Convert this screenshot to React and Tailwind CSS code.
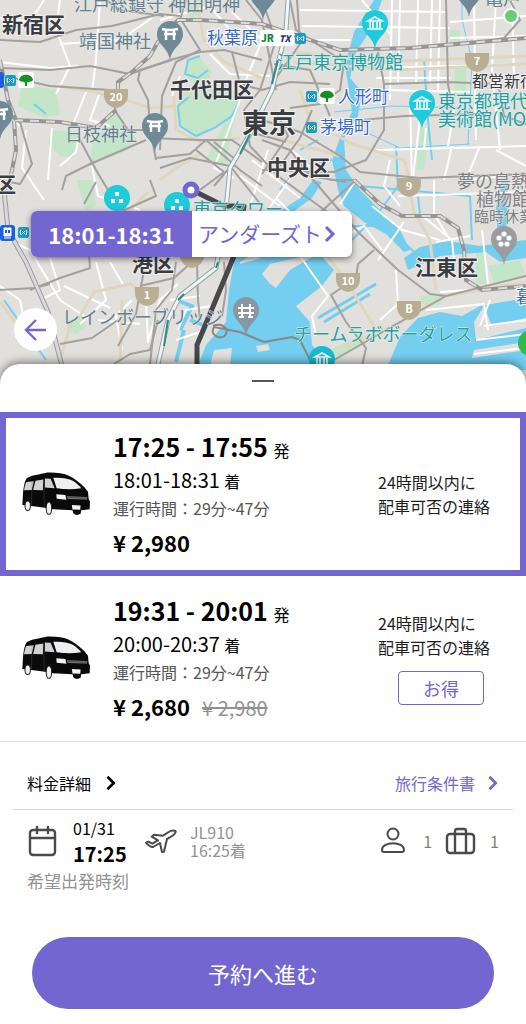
import React, { useState } from 'react';

const rides = [
    {
        id: 1,
        departure: '17:25 - 17:55',
        arrival: '18:01-18:31',
        duration: '運行時間：29分~47分',
        price: '¥ 2,980',
    },
    {
        id: 2,
        departure: '19:31 - 20:01',
        arrival: '20:00-20:37',
        duration: '運行時間：29分~47分',
        price: '¥ 2,680',
        oldPrice: '¥ 2,980',
        badge: 'お得',
    },
];

const waters = [
    // Tokyo bay
    'M236 250 L316 250 L334 270 L322 286 L296 306 L310 322 L312 345 L334 370 L196 370 L206 345 L226 322 L229 290 Z',
    'M386 370 L400 337 L418 318 L440 312 L462 316 L480 306 L526 298 L526 370 Z',
    // Koto canals
    'M404 258 L420 247 L448 241 L480 246 L526 240 L526 258 L500 262 L486 252 L440 256 L408 270 Z',
    'M496 208 L502 180 L508 180 L506 240 L498 240 Z',
    // Sumida river
    'M374 0 L382 0 L372 28 L356 52 L350 78 L362 92 L358 116 L344 138 L346 170 L360 190 L400 230 L410 250 L404 252 L386 234 L364 222 L344 206 L338 190 L332 160 L340 138 L352 112 L348 84 L345 66 L354 32 Z',
    'M313 180 L322 182 L312 198 L290 214 L276 214 L300 198 Z',
];

const parks = [
    'M187 62 L198 56 L212 72 L207 82 L196 86 L186 76 Z',
    'M180 98 L196 82 L220 86 L242 96 L230 118 L210 128 L198 137 L182 128 L176 112 Z',
    'M240 104 L234 120 L226 166 L206 160 L222 128 Z',
    'M22 84 L56 90 L60 114 L44 118 L18 106 Z',
    'M114 112 L136 138 L128 150 L90 166 L92 146 Z',
    'M52 130 L78 132 L74 158 L60 156 L48 144 Z',
    'M194 0 L206 0 L194 20 L184 12 Z',
    'M76 180 L92 180 L96 206 L86 210 Z',
    'M68 322 L82 314 L86 328 L76 334 L66 330 Z',
    'M450 30 L460 30 L460 44 L450 42 Z',
    'M455 64 L466 64 L466 98 L454 96 Z',
    'M420 128 L430 130 L424 170 L416 170 Z',
    'M476 252 L484 240 L488 284 L476 284 Z',
    'M488 266 L520 260 L526 276 L494 284 Z',
    'M420 296 L446 294 L440 304 L424 308 Z',
    'M330 350 L362 334 L366 344 L338 356 Z',
];

const whiteRoads = [
    'M0 18 L30 22 L44 0 M60 0 L56 30 L70 66 L56 94 M100 0 L96 60 L92 92 M0 62 L50 68 L78 66',
    'M152 18 L120 40 L60 44 M86 92 L74 122 M100 92 L90 120 L110 126 M26 130 L22 168 L44 200 M52 128 L48 180',
    'M0 110 L20 126 M60 166 L76 152 L80 130 M92 166 L98 196 L140 210 M160 20 L210 6 L230 30',
    'M232 12 L262 40 L242 90 M180 76 L172 96 M210 54 L230 74 L270 76 M240 100 L214 168 L234 178',
    'M300 10 L446 12 M302 26 L450 28 M362 0 L390 34 M310 40 L350 40 M400 0 L398 84 M418 0 L416 84 M432 0 L430 84',
    'M370 68 L526 64 M376 78 L450 78 M384 90 L470 92 M392 0 L390 100 M410 100 L412 186 M440 0 L438 90',
    'M474 0 L476 140 M496 0 L492 70 L500 150 M512 0 L514 80 M450 22 L526 16 M450 38 L526 36',
    'M376 150 L526 146 M420 118 L412 186 M480 146 L466 180 L500 176 M496 150 L526 166 M444 180 L452 146',
    'M390 160 L384 186 L400 206 M454 110 L448 146 M426 128 L424 150 M398 196 L526 192',
    'M240 176 L280 206 M252 160 L300 198 M268 150 L250 206 M292 176 L268 210 M320 176 L292 150',
    'M0 236 L30 250 L60 300 L84 316 M50 258 L60 290 L40 300 M96 262 L106 300 L80 324 M110 262 L124 286',
    'M132 300 L116 316 L122 350 M146 302 L148 342 L160 300 L178 284 M64 286 L110 308 M0 286 L20 300 L30 350',
    'M98 320 L140 324 M170 300 L200 296 M178 330 L186 310 L212 306 M176 340 L200 332 L196 364',
    'M276 198 L300 222 M300 256 L328 296 L312 316 L316 336 M356 180 L340 204 M372 206 L402 230 L440 240',
    'M330 244 L364 226 L382 250 M396 270 L398 304 L380 320 M404 222 L378 260 M420 214 L452 240 L454 260',
    'M426 310 L484 304 L488 330 M482 230 L488 284 M434 180 L434 214 L450 240 M440 292 L526 286 M436 242 L470 236',
    'M484 326 L526 320 M476 340 L526 334 M474 354 L526 348 M490 300 L480 326',
];

const yellowRoads = [
    'M196 0 L204 40 L224 62 L262 78 M126 100 L150 108 L176 106 M174 96 L176 130 L200 142 L240 138',
    'M60 86 L96 92 L112 98 M294 52 L380 62 L526 56 M294 62 L400 70 L526 64',
    'M300 90 L310 120 L352 144 L404 160 L410 180 M262 130 L290 142 L340 156',
    'M409 186 L414 212 L430 240 L436 290 M322 250 L346 280 L376 330 M80 316 L94 292 L130 284 L152 300',
    'M122 300 L120 364 M0 302 L36 350 M60 360 L72 320 M436 298 L526 282 M340 348 L402 322 L430 304',
    'M160 180 L176 168 L200 154 M120 220 L148 192 M190 96 L180 92',
];

const greyRoads = [
    'M0 40 L40 42 L76 30 L112 26 L160 14 L180 16',
    'M0 68 L50 70 L90 66 L130 74 L170 60 L200 52 L224 50 L262 60',
    'M14 78 L50 86 L110 90 L116 112 L128 130 L150 130',
    'M106 0 L120 10 L164 16 M180 18 L200 50 L176 62 L162 96 L160 150',
    'M172 60 L140 70 L138 80 L148 100 L150 128 L156 160',
    'M0 112 L20 122 L32 164 L20 184 L0 180',
    'M62 190 L66 176 L90 164 L146 140 M78 136 L96 170 L108 190',
    'M150 138 L200 140 L232 140 L262 162 M156 158 L190 154 L206 140 L240 170 L262 186',
    'M160 168 L190 158 L230 166 L262 206 M196 150 L224 172 L200 190 M214 142 L236 160 L214 186',
    'M180 20 L186 0 M262 0 L276 40 L260 90 L244 110 L250 146 L278 176 L330 214',
    'M232 52 L240 84 L262 90 L290 82 L330 84 M246 0 L262 20 L270 60 L276 90',
    'M290 0 L296 30 L344 62 L340 90 L320 104 L290 108 M274 64 L310 70 L330 116',
    'M297 0 L300 44 L276 78 M378 52 L384 84 L446 82 L500 84 M362 120 L404 116 L486 114',
    'M446 0 L448 84 L452 106 M384 84 L384 130 L366 160 L334 172 L262 170',
    'M262 120 L300 132 L340 156 L360 172 L420 178 L526 174 M262 140 L290 150 L310 176 L346 182',
    'M276 112 L288 136 L262 174 M312 110 L300 138 L280 166 M250 132 L286 142',
    'M510 0 L520 20 L504 38 L470 44 M526 124 L504 116 L498 82',
    'M330 180 L356 180 L312 220 M310 176 L332 202 L360 234 L398 270 L430 294 L446 296 L526 276',
    'M374 250 L358 264 L356 278 L331 295 L346 322 L366 348 L362 366 M334 360 L400 322 L446 296',
    'M96 182 L84 204 M150 180 L156 196 L120 212 M30 290 L60 278 L90 268 L88 240',
    'M144 270 L136 314 L118 346 M140 286 L174 278 L192 262 M60 344 L92 338 L118 320 M114 364 L130 354 L150 350 L158 320',
    'M0 290 L34 288 L50 284 M176 262 L172 290 L156 310 L150 364',
    'M224 262 L226 290 L222 316 M197 262 L198 300 L200 320',
];

const railways = [
    'M118 92 L118 82 L132 72 L150 56 L158 42 L178 20 L200 20 L262 24 L340 50 L410 48 L526 38',
    'M14 120 L60 122 L96 128 L116 110 M14 120 L16 150 L8 190 M354 180 L380 204 L402 216 L440 216 L458 228 L464 250 L466 280 L482 290 L526 286',
    'M0 60 L8 100 L16 120',
];

const shrines = [
    [170, 60],
    [155, 152],
];

function Pin({ x, y, color, children }) {
    return (
        <g transform={`translate(${x} ${y})`}>
            <path d="M0 0 C-2 -13 -13 -15 -13 -26 A13 13 0 1 1 13 -26 C13 -15 2 -13 0 0 Z" fill={color} />
            {children}
        </g>
    );
}

function Museum() {
    return (
        <path
            d="M-7 -28 L0 -32 L7 -28 Z M-5 -27 V-21 M-2 -27 V-21 M2 -27 V-21 M5 -27 V-21 M-8 -20 H8"
            fill="none"
            stroke="#fff"
            strokeWidth="1.6"
        />
    );
}

function Torii() {
    return (
        <path d="M-8 -31 Q0 -29 8 -31 M-6 -26 H6 M-4 -30 V-20 M4 -30 V-20" fill="none" stroke="#fff" strokeWidth="2.4" />
    );
}

function MetroMark({ x, y }) {
    return (
        <g transform={`translate(${x} ${y})`}>
            <rect width="11" height="11" rx="2" fill="#1c9cc0" />
            <path d="M3 3 L2 5 L3 8 M8 3 L9 5 L8 8 M4 4 L7 7 M7 4 L4 7" stroke="#fff" strokeWidth="1" fill="none" />
        </g>
    );
}

function Ginkgo({ x, y }) {
    return (
        <g transform={`translate(${x} ${y})`}>
            <rect x="-8" y="-8" width="16" height="16" rx="2" fill="#fff" />
            <path d="M-7 0 C-6 -7 6 -7 7 0 C4 3 2 1 1 3 L1 6 H-1 L-1 3 C-2 1 -4 3 -7 0 Z" fill="#159022" />
        </g>
    );
}

function RouteBadge({ x, y, label }) {
    return (
        <g transform={`translate(${x} ${y})`}>
            <path d="M-12 -8 H12 V-2 C12 6 6 10 0 11 C-6 10 -12 6 -12 -2 Z" fill="#b9ae94" />
            <text y="4" textAnchor="middle" fontSize="11" fontWeight="700" fill="#fff">{label}</text>
        </g>
    );
}

function MapView() {
    return (
        <svg
            className="absolute inset-0 h-full w-full"
            viewBox="0 0 526 384"
            preserveAspectRatio="xMidYMin slice"
            role="img"
            aria-label="東京の地図"
        >
            <rect width="526" height="384" fill="#e2e0dd" />
            {parks.map((d) => <path key={d} d={d} fill="#c3e5c8" />)}
            {waters.map((d) => <path key={d} d={d} fill="#73cef0" />)}

            {/* Moats and thin canals */}
            <g fill="none" stroke="#73cef0" strokeWidth="2">
                <path d="M200 56 L188 60 L185 74 L198 78 L208 70 M190 96 L178 106 L180 126 L196 136 L214 128 L232 116 L240 100 M226 84 L214 80" />
                <path d="M334 112 L392 106 L460 108 M344 122 L400 148 L470 144 M366 20 L350 50 M462 0 L462 20 L472 60 L468 144" strokeWidth="1" />
                <path d="M318 140 L300 150 M332 160 L300 166 L280 190 M360 186 L404 190 L470 196 M366 204 L424 262 M398 190 L396 146 M352 240 L376 216 L398 186" />
                <path d="M424 60 L428 120 L432 160 M470 196 L472 240 M340 226 L390 226 M418 196 L420 214" />
                <path d="M176 300 L192 306 L180 330 M190 320 L206 326 L196 346 M176 362 L184 330" strokeWidth="4" />
                <path d="M4 300 L46 360 M34 104 L46 114" />
            </g>
            {/* Reclaimed land in the bay */}
            <g fill="#e2e0dd">
                <path d="M240 262 L250 256 L262 258 L240 264 Z" />
                <path d="M262 274 L270 264 L300 257 L314 256 L290 270 L276 288 L270 284 Z" />
                <path d="M214 350 L232 348 L230 366 L210 366 Z M256 346 L268 344 L270 350 L258 352 Z" />
                <path d="M474 322 L484 306 L492 326 L526 318 L526 328 L476 340 Z M474 350 L526 342 L526 350 L472 358 Z" />
                <path d="M404 300 L426 306 L400 332 L376 340 Z" />
            </g>
            <path d="M318 318 L376 284 M324 322 L370 294" stroke="#73cef0" strokeWidth="3" fill="none" />

            <g fill="none" stroke="#fff" strokeWidth="2" strokeLinejoin="round">
                {whiteRoads.map((d) => <path key={d} d={d} />)}
            </g>
            <g fill="none" stroke="#e0d6bd" strokeWidth="3" strokeLinejoin="round">
                {yellowRoads.map((d) => <path key={d} d={d} />)}
            </g>
            <g fill="none" stroke="#a3a09e" strokeWidth="2" strokeLinejoin="round">
                {greyRoads.map((d) => <path key={d} d={d} />)}
            </g>
            <path
                d="M213 326 Q222 322 227 330 Q226 339 218 337 Q210 334 214 327 L240 332 L264 342 L292 337 L300 340 L312 364"
                fill="none"
                stroke="#8d8580"
                strokeWidth="2"
            />
            <g fill="none">
                {railways.map((d) => (
                    <g key={d}>
                        <path d={d} stroke="#979594" strokeWidth="4" />
                        <path d={d} stroke="#dedddd" strokeWidth="2" strokeDasharray="9 7" />
                    </g>
                ))}
                <path d="M4 190 L8 230 L26 262 L48 312 L62 366" stroke="#9a9a9f" strokeWidth="5" />
                <path d="M4 190 L8 230 L26 262 L48 312 L62 366" stroke="#d8d8dd" strokeWidth="3" />
                <path d="M288 0 L286 30 L272 90 L250 134 L230 168 L226 210 L216 268 L180 296 L168 320 L158 364" stroke="#8fa5a8" strokeWidth="5" />
                <path d="M288 0 L286 30 L272 90 L250 134 L230 168 L226 210 L216 268 L180 296 L168 320 L158 364" stroke="#f0f6f6" strokeWidth="3" />
                <path d="M278 60 L272 84 M250 134 L240 154 M218 262 L216 268 M184 294 L178 300 M168 320 L164 346" stroke="#2b8a86" strokeWidth="2" />
            </g>

            <RouteBadge x={116} y={97} label="20" />
            <RouteBadge x={477} y={61} label="7" />
            <RouteBadge x={409} y={186} label="9" />
            <RouteBadge x={147} y={295} label="1" />
            <RouteBadge x={192} y={257} label="" />
            <RouteBadge x={348} y={281} label="10" />
            <RouteBadge x={409} y={309} label="B" />

            {/* Booked route */}
            <path
                d="M192 190 L224 206 H244 L234 256 L197 345 V375"
                fill="none"
                stroke="#48484a"
                strokeWidth="5"
                strokeLinejoin="round"
            />

            {/* Pins */}
            {shrines.map(([x, y]) => <Pin key={x} x={x} y={y} color="#6e8a97"><Torii /></Pin>)}
            <Pin x={0} y={140} color="#6e8a97"><Torii /></Pin>
            <Pin x={263} y={20} color="#6e8a97" />
            <Pin x={469} y={17} color="#6e8a97" />
            <Pin x={375} y={49} color="#1ccbdc"><Museum /></Pin>
            <Pin x={422} y={129} color="#1ccbdc"><Museum /></Pin>
            <Pin x={322} y={385} color="#16bccd"><Museum /></Pin>
            <Pin x={246} y={336} color="#8798a3">
                <path d="M-8 -28 H8 M-8 -23 H8 M-4 -32 V-19 M4 -32 V-19 M-7 -19 L-2 -19 M2 -19 H7" stroke="#fff" strokeWidth="2" />
            </Pin>
            <Pin x={504} y={265} color="#9a9ca0">
                <g fill="#fff">
                    <circle cx="0" cy="-31" r="2.6" />
                    <circle cx="5" cy="-27" r="2.6" />
                    <circle cx="3" cy="-21" r="2.6" />
                    <circle cx="-3" cy="-21" r="2.6" />
                    <circle cx="-5" cy="-27" r="2.6" />
                </g>
            </Pin>
            <circle cx="531" cy="343" r="13" fill="#2dbb50" />
            {[[117, 198], [177, 205]].map(([x, y]) => (
                <g key={x} transform={`translate(${x} ${y})`}>
                    <circle r="13" fill="#1ccbdc" />
                    <path d="M-2 -6 H2 V-2 H-2 Z M-6 1 H-2 V5 H-6 Z M2 1 H6 V5 H2 Z" fill="#fff" />
                </g>
            ))}
            <circle cx="511" cy="16" r="8" fill="#fff" opacity="0.8" />
            <circle cx="511" cy="16" r="6" fill="#67cd7d" />

            {/* Station marks */}
            <rect x="-8" y="72" width="12" height="16" rx="3" fill="#1a5fe0" />
            <MetroMark x={5} y={75} />
            <Ginkgo x={26} y={80} />
            <rect x="260" y="30" width="34" height="16" rx="2" fill="#fff" />
            <text x="261" y="42" fontSize="10" fontWeight="900" fill="#0d8a3e">JR</text>
            <text x="279" y="42" fontSize="9" fontWeight="900" fontStyle="italic" fill="#24357d">TX</text>
            <MetroMark x={295} y={33} />
            <MetroMark x={306} y={91} />
            <Ginkgo x={327} y={96} />
            <MetroMark x={306} y={122} />
            <rect x="0" y="225" width="15" height="16" rx="3" fill="#1a5fe0" />
            <path d="M4 228 H11 V236 H4 Z M4 238 H11" fill="#fff" stroke="#fff" />
            <path d="M5 230 H7 V233 H5 Z M8 230 H10 V233 H8 Z" fill="#1a5fe0" />
            <MetroMark x={18} y={227} />

            {/* Place names */}
            <g fontSize="18" fill="#637f8d" stroke="#e8e8e8" strokeWidth="1" paintOrder="stroke">
                <text x="74" y="11">江戸総鎮守 神田明神</text>
                <text x="79" y="48">靖国神社</text>
                <text x="65" y="141">日枝神社</text>
                <text x="62" y="324">レインボーブリッジ</text>
                <text x="485" y="5">亀戸</text>
            </g>
            <g fontSize="18" fill="#7e8081" stroke="#e8e8e8" strokeWidth="1" paintOrder="stroke">
                <text x="457" y="188">夢の島熱</text>
                <text x="476" y="206">植物館</text>
                <text x="474" y="222" fontSize="15">臨時休業</text>
            </g>
            <g fontSize="18" fill="#239f9f" stroke="#e6f0ef" strokeWidth="1" paintOrder="stroke">
                <text x="277" y="69">江戸東京博物館</text>
                <text x="438" y="108">東京都現代</text>
                <text x="438" y="126">美術館(MOT)</text>
                <text x="193" y="216">東京タワー</text>
                <text x="294" y="341">チームラボボーダレス</text>
            </g>
            <g fontSize="17" fill="#3366cc" stroke="#fff" strokeWidth="2" paintOrder="stroke">
                <text x="207" y="44">秋葉原</text>
                <text x="338" y="103">人形町</text>
                <text x="320" y="133">茅場町</text>
                <text x="516" y="303">暮</text>
            </g>
            <g fontSize="21" fontWeight="700" fill="#3a3c40" stroke="#f0f0f0" strokeWidth="2" paintOrder="stroke">
                <text x="2" y="32">新宿区</text>
                <text x="170" y="97">千代田区</text>
                <text x="242" y="133" fontSize="27">東京</text>
                <text x="267" y="175">中央区</text>
                <text x="-5" y="192">区</text>
                <text x="132" y="271">港区</text>
                <text x="415" y="275">江東区</text>
                <text x="472" y="87" fontSize="16" fontWeight="400">都営新宿</text>
            </g>

            <circle cx="191" cy="190" r="6" fill="#fff" stroke="#7466d0" strokeWidth="5" />
        </svg>
    );
}

function Van() {
    return (
        <svg className="h-[44px] w-[68px] shrink-0" viewBox="0 0 202 130" aria-hidden="true">
            <path
                d="M1 98 L3 62 C5 42 8 26 14 18 C28 9 52 7 75 1 C98 0 122 3 136 9 C156 18 174 33 186 46 L196 58 L198 80 L202 88 L201 110 L176 113 L174 124 C166 129 156 128 152 121 L150 113 L92 110 L68 106 L28 101 Z"
                fill="#0a0a0b"
            />
            <g fill="#d2d2d4">
                <path d="M13 29 L35 27 L29 53 L6 54 C8 43 9 35 13 29 Z" />
                <path d="M40 26 L63 22 L62 54 L33 53 Z" />
                <path d="M68 19 L85 20 L97 48 L68 46 Z" />
                <path d="M93 17 C112 15 137 18 151 26 C162 33 170 41 176 48 C150 52 122 51 103 48 Z" fill="#efeff1" />
            </g>
            <path d="M102 66 L129 68 L132 82 L103 79 Z" fill="#f4f4f5" />
            <path d="M133 72 L194 74 L193 81 L136 80 Z" fill="#85858a" />
            <path d="M135 76 L194 77" stroke="#222" strokeWidth="2" />
            <path d="M148 98 L174 99 L173 112 L150 111 Z" fill="#f4f4f5" />
            <path d="M30 28 L28 100 M65 22 L66 106" stroke="#67676a" strokeWidth="1" />
            <ellipse cx="17" cy="100" rx="8" ry="14" fill="#f0f0f1" stroke="#222" strokeWidth="3" />
            <ellipse cx="80" cy="107" rx="8" ry="18" fill="#f0f0f1" stroke="#222" strokeWidth="3" />
        </svg>
    );
}

function Chevron({ className }) {
    return (
        <svg className={className} viewBox="0 0 12 18" fill="none" stroke="currentColor" strokeWidth="3" aria-hidden="true">
            <path d="M2 2 L9 9 L2 16" />
        </svg>
    );
}

function RideRow({ ride, selected, onSelect }) {
    return (
        <button
            type="button"
            aria-pressed={selected}
            onClick={onSelect}
            className={`flex h-[164px] w-full items-center border-[#7466d0] px-4 text-left ${selected ? 'border-6' : 'border-x-6 border-x-transparent'}`}
        >
            <Van />
            <span className="ml-[23px] flex flex-1 flex-col whitespace-nowrap text-black">
                <span className="text-[25px] leading-9 font-bold">
                    {ride.departure} <span className="text-base font-normal">発</span>
                </span>
                <span className="text-xl leading-8">
                    {ride.arrival} <span className="text-base">着</span>
                </span>
                <span className="text-base leading-6 text-[#555555]">{ride.duration}</span>
                <span className="mt-1 text-[22px] leading-9 font-bold">
                    {ride.price}
                    {ride.oldPrice && <s className="ml-3 text-xl font-normal text-[#929292]">{ride.oldPrice}</s>}
                </span>
            </span>
            <span className="mr-3 flex w-[114px] shrink-0 flex-col whitespace-nowrap text-base leading-6 text-[#1c1c1c]">
                <span>24時間以内に</span>
                <span>配車可否の連絡</span>
                {ride.badge && (
                    <span className="mt-3 ml-5 w-[86px] rounded border border-[#7466d0] text-center text-lg leading-8 text-[#7466d0]">
                        {ride.badge}
                    </span>
                )}
            </span>
        </button>
    );
}

function App() {
    const [selectedId, setSelectedId] = useState(1);

    return (
        <div className="min-h-screen overflow-hidden bg-white font-['Noto_Sans_CJK_JP',sans-serif]">
            {/* Map */}
            <div className="relative h-96 overflow-hidden">
                <MapView />
                <button
                    type="button"
                    className="absolute top-[211px] left-[31px] flex h-[46px] w-[321px] items-center overflow-hidden rounded-md bg-white text-left text-[#7466d0] shadow-[0_2px_6px_rgba(0,0,0,0.5)]"
                >
                    <span className="flex h-full w-[161px] shrink-0 items-center justify-center bg-[#7466d0] text-[22px] font-bold text-white">
                        18:01-18:31
                    </span>
                    <span className="ml-[6px] flex-1 overflow-hidden whitespace-nowrap text-[21px]">アンダーズト</span>
                    <Chevron className="mr-4 h-5 w-3 shrink-0" />
                </button>
                <button
                    type="button"
                    aria-label="戻る"
                    className="absolute top-[308px] left-[14px] flex size-[43px] items-center justify-center rounded-full bg-white text-[#7466d0]"
                >
                    <svg className="size-6" viewBox="0 0 24 24" fill="none" stroke="currentColor" strokeWidth="2.4" aria-hidden="true">
                        <path d="M22 12 H3 M12 2 L2 12 L12 22" />
                    </svg>
                </button>
            </div>

            {/* Bottom sheet */}
            <div className="relative -mt-5 rounded-t-[20px] bg-white shadow-[0_-2px_8px_rgba(0,0,0,0.45)]">
                <div className="flex h-12 justify-center pt-4">
                    <div className="h-[2px] w-[22px] bg-[#555555]" />
                </div>

                {rides.map((ride) => (
                    <RideRow
                        key={ride.id}
                        ride={ride}
                        selected={selectedId === ride.id}
                        onSelect={() => setSelectedId(ride.id)}
                    />
                ))}

                <div className="mt-px border-t border-[#dcdcdc] px-[13px]">
                    <div className="flex h-[68px] items-end justify-between border-b border-[#d4d4d4] px-[14px] pb-[14px] text-base leading-6">
                        <a href="#price" className="flex items-center text-black">
                            料金詳細
                            <Chevron className="ml-[14px] h-4 w-3" />
                        </a>
                        <a href="#terms" className="flex items-center text-[#7466d0]">
                            旅行条件書
                            <Chevron className="ml-3 h-4 w-3" />
                        </a>
                    </div>

                    {/* Trip summary */}
                    <div className="flex items-center px-[14px] pt-[5px]">
                        <svg className="h-8 w-[30px]" viewBox="0 0 30 32" fill="none" stroke="#4a4a4a" strokeWidth="2.4" strokeLinecap="round" aria-hidden="true">
                            <rect x="3" y="5" width="25" height="25" rx="3" />
                            <path d="M3 13 H28 M10 2 V8 M21 2 V8" />
                        </svg>
                        <div className="ml-4 w-[72px]">
                            <div className="text-base leading-[26px]">01/31</div>
                            <div className="text-xl font-bold leading-[26px]">17:25</div>
                        </div>
                        <svg className="h-[26px] w-8" viewBox="0 0 96 78" fill="none" stroke="#4a4a4a" strokeWidth="6" strokeLinejoin="round" aria-hidden="true">
                            <path d="M3 44 L10 41 L22 47 L39 37 L20 26 L27 20 L54 23 L71 12 C80 6 94 6 92 12 C90 19 80 26 66 33 L57 71 L51 72 L45 45 L24 57 C15 58 9 51 3 44 Z" />
                        </svg>
                        <div className="ml-[13px] text-base leading-[18px] text-[#929292]">
                            <div>JL910</div>
                            <div>16:25着</div>
                        </div>
                        <div className="ml-auto flex items-center text-base text-[#808080]">
                            <svg className="h-7 w-[26px]" viewBox="0 0 26 28" fill="none" stroke="#4a4a4a" strokeWidth="2" aria-hidden="true">
                                <circle cx="13" cy="7" r="5.5" />
                                <path d="M2 23 C2 14 24 14 24 23 Q24 25 22 25 H4 Q2 25 2 23 Z" />
                            </svg>
                            <span className="ml-[17px]">1</span>
                            <svg className="ml-[13px] h-7 w-[31px]" viewBox="0 0 31 28" fill="none" stroke="#4a4a4a" strokeWidth="2.4" aria-hidden="true">
                                <rect x="2" y="7" width="27" height="19" rx="3" />
                                <path d="M10 26 V4 Q10 2 12 2 H19 Q21 2 21 4 V26" />
                            </svg>
                            <span className="ml-[14px]">1</span>
                        </div>
                    </div>
                    <div className="px-[14px] pt-[2px] text-[17px] leading-6 text-[#929292]">希望出発時刻</div>
                </div>

                <div className="px-8 pt-[44px] pb-[17px]">
                    <button type="button" className="h-[72px] w-full rounded-full bg-[#7466d0] text-[22px] text-white">
                        予約へ進む
                    </button>
                </div>
            </div>
        </div>
    );
}

export default App;
